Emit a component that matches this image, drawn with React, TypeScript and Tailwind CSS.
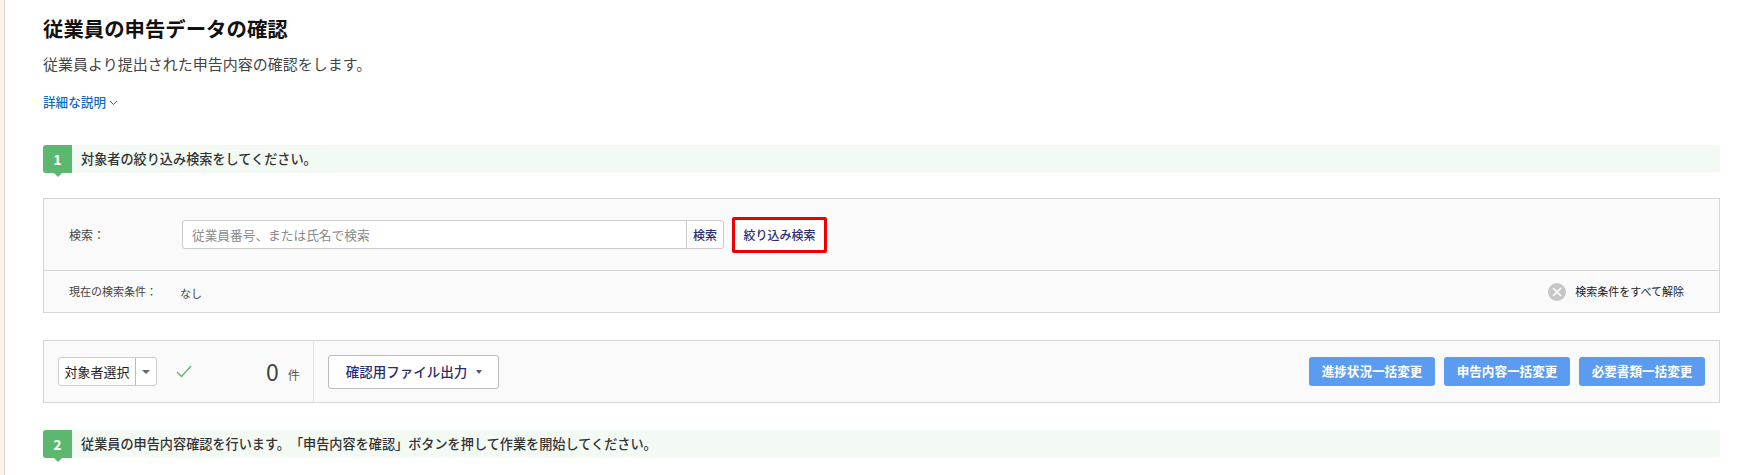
import React from "react";

function Step({ n, children }: { n: string; children: React.ReactNode }) {
  return (
    <div className="flex h-[28px] items-stretch rounded-[3px] bg-[#f3f9f3]">
      <div className="relative flex w-[29px] shrink-0 items-center justify-center rounded-l-[3px] bg-[#5cb86f] text-[14px] font-bold text-white">
        {n}
        <span className="absolute bottom-[-4px] left-1/2 h-0 w-0 -translate-x-1/2 border-x-[4px] border-t-[4px] border-x-transparent border-t-[#5cb86f]" />
      </div>
      <div className="flex items-center pl-[9px] text-[13.15px] font-medium text-[#333333]">{children}</div>
    </div>
  );
}

function BlueButton({ children }: { children: React.ReactNode }) {
  return (
    <button className="flex h-[29px] w-[126px] items-center justify-center rounded-[3px] bg-[#5b9bf0] text-[12.6px] font-bold text-white">
      {children}
    </button>
  );
}

export default function App() {
  return (
    <div className="h-[475px] w-[1753px] overflow-hidden bg-white font-['Noto_Sans_CJK_JP','Noto_Sans',sans-serif] [text-spacing-trim:space-all]">
      <div className="relative ml-[4px] h-full border-l border-l-[#dcd6cf] pl-[38px] pr-[33px]">
        <span className="absolute left-[-5px] top-0 h-full w-[4px] bg-[#fdf4ea]" />
        <h1 className="pt-[14px] text-[20.4px] leading-[28px] font-bold text-[#111111]">従業員の申告データの確認</h1>
        <p className="mt-[10px] text-[15px] leading-[24px] text-[#444444]">従業員より提出された申告内容の確認をします。</p>
        <a className="mt-[16px] flex h-[20px] items-center gap-[3px] text-[12.6px] font-medium text-[#0f6bb8]">
          詳細な説明
          <svg width="9" height="9" viewBox="0 0 9 9" fill="none" stroke="#0f6bb8" strokeWidth="1"><path d="M1 3l3.5 3.5L8 3" /></svg>
        </a>

        <div className="mt-[33px]">
          <Step n="1">対象者の絞り込み検索をしてください。</Step>
        </div>

        <section className="mt-[25px] border border-[#d6d6d6] bg-[#fafafa]">
          <div className="flex h-[72px] items-center border-b border-[#d6d6d6] pl-[25px]">
            <span className="w-[113px] text-[12px] text-[#444444]">検索：</span>
            <div className="flex h-[29px] w-[542px] rounded-[3px] border border-[#cccccc] bg-white">
              <div className="flex flex-1 items-center pl-[9px] text-[12.7px] text-[#8a8a8a]">従業員番号、または氏名で検索</div>
              <button className="flex w-[37px] items-center justify-center border-l border-[#cccccc] text-[12px] font-medium text-[#2c2c6e]">検索</button>
            </div>
            <button className="ml-[8px] flex h-[36px] w-[95px] items-center justify-center rounded-[2px] border-[3px] border-[#ee0000] bg-white text-[12px] font-medium text-[#2c2c6e]">絞り込み検索</button>
          </div>
          <div className="flex h-[41px] items-center pl-[25px] pr-[35px]">
            <span className="w-[111px] text-[11px] text-[#444444]">現在の検索条件：</span>
            <span className="mt-[3px] text-[11px] text-[#444444]">なし</span>
            <div className="ml-auto flex items-center gap-[9px]">
              <span className="flex h-[18px] w-[18px] items-center justify-center rounded-full bg-[#c6c6c6]">
                <svg width="10" height="10" viewBox="0 0 10 10" stroke="#ffffff" strokeWidth="1.7" fill="none"><path d="M1 1l8 8M9 1l-8 8" /></svg>
              </span>
              <span className="text-[11px] text-[#222222]">検索条件をすべて解除</span>
            </div>
          </div>
        </section>

        <section className="mt-[27px] flex h-[63px] items-stretch border border-[#d6d6d6] bg-[#fafafa]">
          <div className="flex w-[270px] items-center border-r border-[#e6e6e6] pl-[14px]">
            <div className="flex h-[29px] w-[99px] rounded-[3px] border border-[#cccccc] bg-white">
              <span className="flex flex-1 items-center justify-center text-[13px] text-[#222222]">対象者選択</span>
              <span className="flex w-[21px] items-center justify-center border-l border-[#bbbbbb]">
                <span className="h-0 w-0 border-x-[4px] border-t-[4px] border-x-transparent border-t-[#666666]" />
              </span>
            </div>
            <svg className="ml-[19px]" width="16" height="13" viewBox="0 0 16 13" fill="none" stroke="#5cb86f" strokeWidth="1.3"><path d="M1 7l4.5 4.5L15 1" /></svg>
            <span className="ml-[74px] text-[23px] leading-none text-[#444444]">0</span>
            <span className="ml-[9px] mt-[6px] text-[12px] text-[#555555]">件</span>
          </div>
          <div className="flex flex-1 items-center pl-[14px] pr-[14px]">
            <button className="flex h-[34px] w-[171px] items-center justify-center gap-[9px] rounded-[3px] border border-[#bbbbbb] bg-white pl-[1px] text-[13.5px] font-medium text-[#2c2c6e]">
              確認用ファイル出力
              <span className="h-0 w-0 border-x-[3.5px] border-t-[4px] border-x-transparent border-t-[#555577]" />
            </button>
            <div className="ml-auto flex gap-[9px]">
              <BlueButton>進捗状況一括変更</BlueButton>
              <BlueButton>申告内容一括変更</BlueButton>
              <BlueButton>必要書類一括変更</BlueButton>
            </div>
          </div>
        </section>

        <div className="mt-[27px]">
          <Step n="2">従業員の申告内容確認を行います。「申告内容を確認」ボタンを押して作業を開始してください。</Step>
        </div>
      </div>
    </div>
  );
}
